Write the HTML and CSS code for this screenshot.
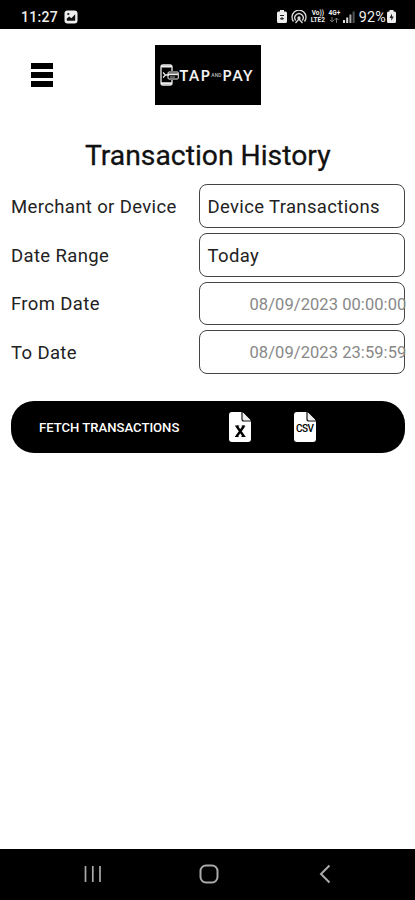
FILE: index.html
```html
<!DOCTYPE html>
<html lang="en">

<head>
  <meta charset="UTF-8" />
  <meta name="viewport" content="width=device-width, initial-scale=1.0" />
  <title>Transaction History</title>
  <link rel="stylesheet" href="styles.css">
</head>

<body>
  <div class="status-bar">
    <div class="status-left">
      <span class="time">11:27</span>
      <svg width="14" height="14" viewBox="0 0 14 14">
        <rect x="0.5" y="0.5" width="13" height="13" rx="3" fill="#eee" />
        <path d="M2.8 10.8V8.5l2.5-2 2 1.8 3.9-4v6.5z" fill="#111" />
        <circle cx="4.3" cy="4" r="1.1" fill="#111" />
      </svg>
    </div>
    <div class="status-right">
      <svg class="icon-saver" width="10" height="13" viewBox="0 0 10 13">
        <path d="M3 0h4v1.5h1.5Q10 1.5 10 3v8.5Q10 13 8.5 13h-7Q0 13 0 11.5V3Q0 1.5 1.5 1.5H3z" fill="#eee" />
        <path d="M3 5.5h4M5 7v3M3 8.7h4" stroke="#222" stroke-width="1" />
      </svg>
      <svg class="icon-hotspot" width="16" height="14" viewBox="0 0 16 14" fill="none" stroke="#ddd" stroke-width="1.3">
        <path d="M2.5 11.5A7 7 0 1 1 13.5 11.5" />
        <path d="M4.7 10.5A4.2 4.2 0 1 1 11.3 10.5" />
        <circle cx="8" cy="8" r="1" fill="#ddd" />
        <path d="M4.5 13L8 9l3.5 4" />
      </svg>
      <div class="volte"><span>Vo))</span><span>LTE2</span></div>
      <div class="network">
        <span>4G+</span>
        <svg width="10" height="6" viewBox="0 0 10 6" fill="none" stroke="#777">
          <path d="M3 0v5M1 3l2 2 2-2M7.5 6V1M5.5 3l2-2 2 2" />
        </svg>
      </div>
      <svg class="icon-signal" width="12" height="12" viewBox="0 0 12 12" fill="#ddd">
        <rect x="0" y="9" width="2" height="3" />
        <rect x="3.2" y="6.5" width="2" height="5.5" />
        <rect x="6.4" y="3.5" width="2" height="8.5" fill="#aaa" />
        <rect x="9.6" y="0.5" width="2" height="11.5" fill="#555" />
      </svg>
      <span class="battery">92%</span>
      <svg class="icon-battery" width="9" height="13" viewBox="0 0 9 13">
        <path d="M2.5 0h4v1.5h1Q9 1.5 9 3v8.5Q9 13 7.5 13h-6Q0 13 0 11.5V3Q0 1.5 1.5 1.5h1z" fill="#eee" />
        <path d="M5 3.5L2.5 8h1.8v2.8L6.8 6.5H5z" fill="#222" />
      </svg>
    </div>
  </div>

  <div class="header">
    <div class="menu-btn">
      <span></span>
      <span></span>
      <span></span>
    </div>
    <div class="logo">
      <svg width="19" height="22" viewBox="0 0 19 22" fill="none" stroke="#eee">
        <path d="M12 7V3Q12 1 10 1H3Q1 1 1 3v16q0 2 2 2h7q2 0 2-2v-3" stroke-width="1.3" />
        <path d="M1 2.5h11M1 19.2h11" stroke-width="2" />
        <path d="M3 8.5l2.5 2.5L3 13.5M6 11h3" stroke-width="1.3" />
        <rect x="8" y="8" width="10.3" height="7" rx="1" />
        <path d="M8 10.3h10" stroke-width="1.8" />
        <path d="M10 13h5" stroke="#aaa" />
      </svg>
      <span class="logo-word">TAP</span>
      <span class="logo-and">AND</span>
      <span class="logo-word">PAY</span>
    </div>
  </div>

  <div class="content">
    <h1>Transaction History</h1>

    <div class="form">
      <div class="row">
        <div class="label">Merchant or Device</div>
        <div class="field">Device Transactions</div>
      </div>
      <div class="row">
        <div class="label">Date Range</div>
        <div class="field">Today</div>
      </div>
      <div class="row">
        <div class="label">From Date</div>
        <div class="field date">08/09/2023 00:00:00</div>
      </div>
      <div class="row">
        <div class="label">To Date</div>
        <div class="field date">08/09/2023 23:59:59</div>
      </div>
    </div>

    <div class="actions">
      <span class="fetch-btn">FETCH TRANSACTIONS</span>
      <div class="file-icon">
        <svg width="22" height="30" viewBox="0 0 22 30">
          <path d="M3 0h10l9 9v18q0 3-3 3H3q-3 0-3-3V3q0-3 3-3z" fill="#fff" />
          <path d="M13 0v7q0 2 2 2h7" fill="none" stroke="#111" stroke-width="1.2" />
          <path d="M14 0.500v6.500q0 1 1 1h6.500z" fill="#eee" />
          <path d="M7.5 14l7.5 10.5M15 14L7.5 24.5" stroke="#000" stroke-width="2.4" />
          <path d="M6.2 14h4M12.7 14h3.5M6 24.5h3.5M12.5 24.5h4" stroke="#000" stroke-width="1.2" />
        </svg>
      </div>
      <div class="file-icon csv">
        <svg width="22" height="30" viewBox="0 0 22 30">
          <path d="M3 0h10l9 9v18q0 3-3 3H3q-3 0-3-3V3q0-3 3-3z" fill="#fff" />
          <path d="M13 0v7q0 2 2 2h7" fill="none" stroke="#111" stroke-width="1.2" />
          <path d="M14 0.500v6.500q0 1 1 1h6.500z" fill="#eee" />
        </svg>
        <span>CSV</span>
      </div>
    </div>
  </div>

  <div class="nav-bar">
    <svg width="18" height="18" viewBox="0 0 18 18" stroke="#aaa" stroke-width="1.7">
      <path d="M1.5 1v16M8.8 1v16M16 1v16" />
    </svg>
    <svg class="home" width="20" height="20" viewBox="0 0 20 20" fill="none" stroke="#aaa" stroke-width="2">
      <rect x="1.5" y="1.5" width="17" height="17" rx="5.5" />
    </svg>
    <svg width="12" height="20" viewBox="0 0 12 20" fill="none" stroke="#aaa" stroke-width="2">
      <path d="M10.5 1.5L2 10l8.5 8.5" />
    </svg>
  </div>
</body>

</html>
```
FILE: styles.css
```css
* {
  box-sizing: border-box;
  margin: 0;
  padding: 0;
}

body {
  font-family: Roboto, 'Liberation Sans', sans-serif;
  height: 900px;
  display: flex;
  flex-direction: column;
  background-color: #fff;
  color: #111;
  overflow: hidden;
}

svg {
  display: block;
  flex-shrink: 0;
}

/* Status bar */
.status-bar {
  height: 29px;
  padding: 4px 19px 0 21px;
  background-color: #000;
  color: #eee;
  display: flex;
  justify-content: space-between;
  align-items: center;
}

.status-left,
.status-right {
  display: flex;
  align-items: center;
}

.time {
  font-size: 14px;
  font-weight: 500;
  letter-spacing: 0.3px;
  margin-right: 6px;
}

.icon-saver {
  margin-right: 4px;
}

.volte,
.network {
  display: flex;
  flex-direction: column;
  align-items: center;
  font-size: 6.5px;
  font-weight: 700;
  line-height: 7px;
  width: 16px;
  margin-left: 3px;
  white-space: nowrap;
}

.network {
  width: 13px;
  margin-left: 2px;
  padding-bottom: 1px;
}

.icon-signal {
  margin-left: 2px;
}

.battery {
  font-size: 14.3px;
  font-weight: 400;
  margin-left: 4px;
  letter-spacing: 0.2px;
}

.icon-battery {
  margin-left: 1px;
}

/* Header */
.header {
  display: grid;
  grid-template-columns: 1fr 106px 1fr;
  align-items: center;
  padding-top: 16px;
}

.menu-btn {
  width: 22px;
  margin-left: 31px;
  display: flex;
  flex-direction: column;
  gap: 3px;
}

.menu-btn span {
  height: 6px;
  background-color: #000;
}

.logo {
  height: 60px;
  padding-left: 5px;
  background-color: #000;
  color: #f2f2f2;
  display: flex;
  align-items: center;
}

.logo-word {
  font-family: Lato, sans-serif;
  font-size: 14.5px;
  font-weight: 700;
  letter-spacing: 1.7px;
  margin-left: 1px;
}

.logo-and {
  font-size: 5px;
  font-weight: 500;
  color: #bbb;
}

/* Content */
.content {
  flex: 1;
  padding: 0 10.5px 0 11px;
}

h1 {
  margin-top: 34px;
  font-size: 28.3px;
  font-weight: 400;
  line-height: 34px;
  text-align: center;
  -webkit-text-stroke: 0.3px #111;
}

.form {
  display: flex;
  flex-direction: column;
  gap: 5px;
  margin-top: 11px;
}

.row {
  display: flex;
  align-items: center;
}

.label {
  flex: 1;
  padding-top: 2px;
  font-size: 18.5px;
  letter-spacing: 0.37px;
  color: #222;
}

.field {
  width: 206px;
  height: 43.8px;
  padding-left: 8px;
  border: 1px solid #444;
  border-radius: 8px;
  font-size: 18.5px;
  line-height: 44px;
  letter-spacing: 0.35px;
  color: #222;
  white-space: nowrap;
}

.field.date {
  padding-left: 50px;
  font-size: 16.5px;
  letter-spacing: 0.07px;
  color: #888;
}

/* Actions */
.actions {
  height: 52px;
  margin-top: 27px;
  padding-left: 28px;
  border-radius: 23px;
  background-color: #000;
  color: #fff;
  display: flex;
  align-items: center;
}

.fetch-btn {
  width: 190px;
  font-size: 13.1px;
  font-weight: 500;
}

.file-icon {
  position: relative;
}

.csv {
  margin-left: 43px;
}

.csv span {
  position: absolute;
  top: 11px;
  left: 2px;
  color: #000;
  font-size: 10px;
  font-weight: 500;
  letter-spacing: -0.5px;
}

/* Navigation bar */
.nav-bar {
  height: 51px;
  padding: 0 84px 2px;
  background-color: #000;
  display: flex;
  justify-content: space-between;
  align-items: center;
}

.home {
  margin-right: 4px;
}
```
